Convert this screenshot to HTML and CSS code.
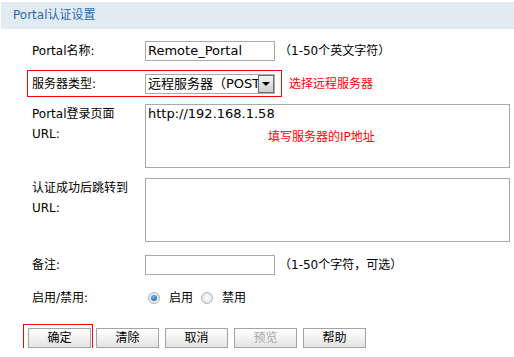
FILE: index.html
```html
<!DOCTYPE html>
<html lang="zh-CN">
<head>
  <meta charset="UTF-8" />
  <title>Portal认证设置</title>
  <link rel="stylesheet" href="styles.css">
</head>
<body>
  <div class="title-bar">Portal认证设置</div>

  <div class="form">
    <div class="row row-name">
      <div class="label">Portal名称:</div>
      <div class="input">Remote_Portal</div>
      <div class="hint">（1-50个英文字符）</div>
    </div>

    <div class="row row-type">
      <div class="mark-box">
        <div class="label">服务器类型:</div>
        <div class="select">
          <span class="select-text">远程服务器（POST）</span>
          <span class="select-btn"></span>
        </div>
      </div>
      <div class="note">选择远程服务器</div>
    </div>

    <div class="row row-login">
      <div class="label">Portal登录页面<br>URL:</div>
      <div class="textarea">
        http://192.168.1.58
        <span class="note note-in">填写服务器的IP地址</span>
      </div>
    </div>

    <div class="row row-jump">
      <div class="label">认证成功后跳转到<br>URL:</div>
      <div class="textarea"></div>
    </div>

    <div class="row row-remark">
      <div class="label">备注:</div>
      <div class="input"></div>
      <div class="hint">（1-50个字符，可选）</div>
    </div>

    <div class="row row-state">
      <div class="label">启用/禁用:</div>
      <span class="radio checked"></span><span class="radio-text">启用</span>
      <span class="radio"></span><span class="radio-text">禁用</span>
    </div>

    <div class="buttons">
      <div class="btn-mark">
        <div class="btn">确定</div>
      </div>
      <div class="btn">清除</div>
      <div class="btn">取消</div>
      <div class="btn disabled">预览</div>
      <div class="btn">帮助</div>
    </div>
  </div>
</body>
</html>
```

FILE: styles.css
```css
body {
  margin: 0;
  background: #fff;
  color: #000;
  font-family: "DejaVu Sans", "Noto Sans CJK SC", sans-serif;
  font-size: 12px;
}
.title-bar {
  margin: 2px 0 0 1px;
  height: 27px;
  line-height: 27px;
  padding-left: 12px;
  background: #e3ebf2;
  color: #2c68b0;
}
.row {
  display: flex;
  align-items: flex-start;
}
.label {
  width: 113px;
  padding-left: 32px;
  line-height: 20px;
  flex-shrink: 0;
}
.input {
  box-sizing: border-box;
  width: 130px;
  height: 20px;
  border: 1px solid #a9a9a9;
  padding-left: 2px;
  line-height: 18px;
  font-size: 13px;
}
.hint {
  line-height: 20px;
  margin-left: 4px;
}
.row-name {
  margin-top: 12px;
}
.row-type {
  margin-top: 10px;
  align-items: center;
}
.mark-box {
  display: flex;
  align-items: center;
  margin-left: 28px;
  width: 253px;
  height: 25px;
  box-shadow: 0 0 0 1px #ff0000;
}
.mark-box .label {
  width: 113px;
  padding-left: 4px;
}
.select {
  box-sizing: border-box;
  display: flex;
  width: 130px;
  height: 20px;
  border: 1px solid #a9a9a9;
}
.select-text {
  flex: 1;
  overflow: hidden;
  white-space: nowrap;
  padding-left: 2px;
  line-height: 18px;
  font-size: 13px;
}
.select-btn {
  position: relative;
  width: 14px;
  border: 1px solid #6f6f6f;
  background: linear-gradient(#f4f4f4, #cfcfcf);
}
.select-btn::after {
  content: "";
  position: absolute;
  left: 3px;
  top: 6px;
  border-left: 4px solid transparent;
  border-right: 4px solid transparent;
  border-top: 4px solid #000;
}
.note {
  color: #ff0000;
  margin-left: 8px;
  line-height: 20px;
}
.row-login {
  margin-top: 8px;
}
.textarea {
  position: relative;
  box-sizing: border-box;
  width: 365px;
  height: 64px;
  border: 1px solid #a9a9a9;
  padding: 1px 2px;
  line-height: 16px;
  font-size: 13px;
}
.note-in {
  position: absolute;
  left: 122px;
  top: 22px;
  margin: 0;
  font-size: 12px;
}
.row-jump {
  margin-top: 10px;
}
.row-remark {
  margin-top: 13px;
}
.row-state {
  margin-top: 13px;
  align-items: center;
}
.radio {
  box-sizing: border-box;
  position: relative;
  width: 12px;
  height: 12px;
  margin-left: 3px;
  border: 1px solid #b3b3b3;
  border-radius: 50%;
  background: radial-gradient(#fdfdfd, #dcdcdc);
}
.radio.checked::after {
  content: "";
  position: absolute;
  left: 2px;
  top: 2px;
  width: 6px;
  height: 6px;
  border-radius: 50%;
  background: radial-gradient(circle at 40% 35%, #6fb2e8, #0f5a9e);
}
.radio-text {
  margin: 0 5px 0 9px;
  line-height: 20px;
}
.buttons {
  display: flex;
  align-items: center;
  gap: 6px;
  margin-top: 20px;
  padding-left: 29px;
}
.btn-mark {
  display: flex;
  margin: -4px -2px -4px -5px;
  padding: 3px 1px 3px 4px;
  box-shadow: 0 0 0 1px #ff0000;
}
.btn {
  box-sizing: border-box;
  width: 63px;
  height: 20px;
  line-height: 18px;
  text-align: center;
  border: 1px solid #a3a3a3;
  background: linear-gradient(#ffffff, #e4e4e4);
}
.btn.disabled {
  color: #a8a8a8;
}
```
